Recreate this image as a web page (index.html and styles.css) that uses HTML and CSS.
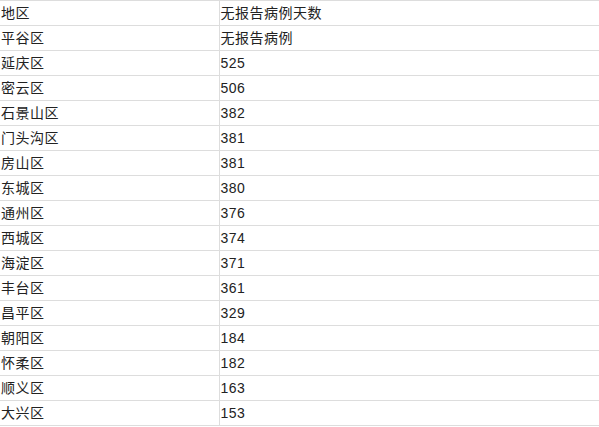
FILE: index.html
```html
<!DOCTYPE html>
<html lang="zh">
<head>
<meta charset="utf-8">
<link rel="stylesheet" href="styles.css">
</head>
<body>
<table class="data">
  <colgroup><col class="c1"><col class="c2"></colgroup>
  <tr><td>地区</td><td>无报告病例天数</td></tr>
  <tr><td>平谷区</td><td>无报告病例</td></tr>
  <tr><td>延庆区</td><td>525</td></tr>
  <tr><td>密云区</td><td>506</td></tr>
  <tr><td>石景山区</td><td>382</td></tr>
  <tr><td>门头沟区</td><td>381</td></tr>
  <tr><td>房山区</td><td>381</td></tr>
  <tr><td>东城区</td><td>380</td></tr>
  <tr><td>通州区</td><td>376</td></tr>
  <tr><td>西城区</td><td>374</td></tr>
  <tr><td>海淀区</td><td>371</td></tr>
  <tr><td>丰台区</td><td>361</td></tr>
  <tr><td>昌平区</td><td>329</td></tr>
  <tr><td>朝阳区</td><td>184</td></tr>
  <tr><td>怀柔区</td><td>182</td></tr>
  <tr><td>顺义区</td><td>163</td></tr>
  <tr><td>大兴区</td><td>153</td></tr>
</table>
</body>
</html>
```
FILE: styles.css
```css
html, body {
  margin: 0;
  padding: 0;
  background: #fff;
}
.data {
  border-collapse: collapse;
  table-layout: fixed;
  width: 599px;
  font-family: "Liberation Sans", "Noto Sans CJK SC", sans-serif;
  font-size: 14px;
  letter-spacing: 0.5px;
  color: #222;
}
.c1 { width: 219px; }
.data td {
  height: 24px;
  padding: 0 0 0 1px;
  border-top: 1px solid #ddd;
  border-bottom: 1px solid #ddd;
  vertical-align: middle;
  line-height: 24px;
  white-space: nowrap;
}
.data td + td {
  border-left: 1px solid #ddd;
}
```
